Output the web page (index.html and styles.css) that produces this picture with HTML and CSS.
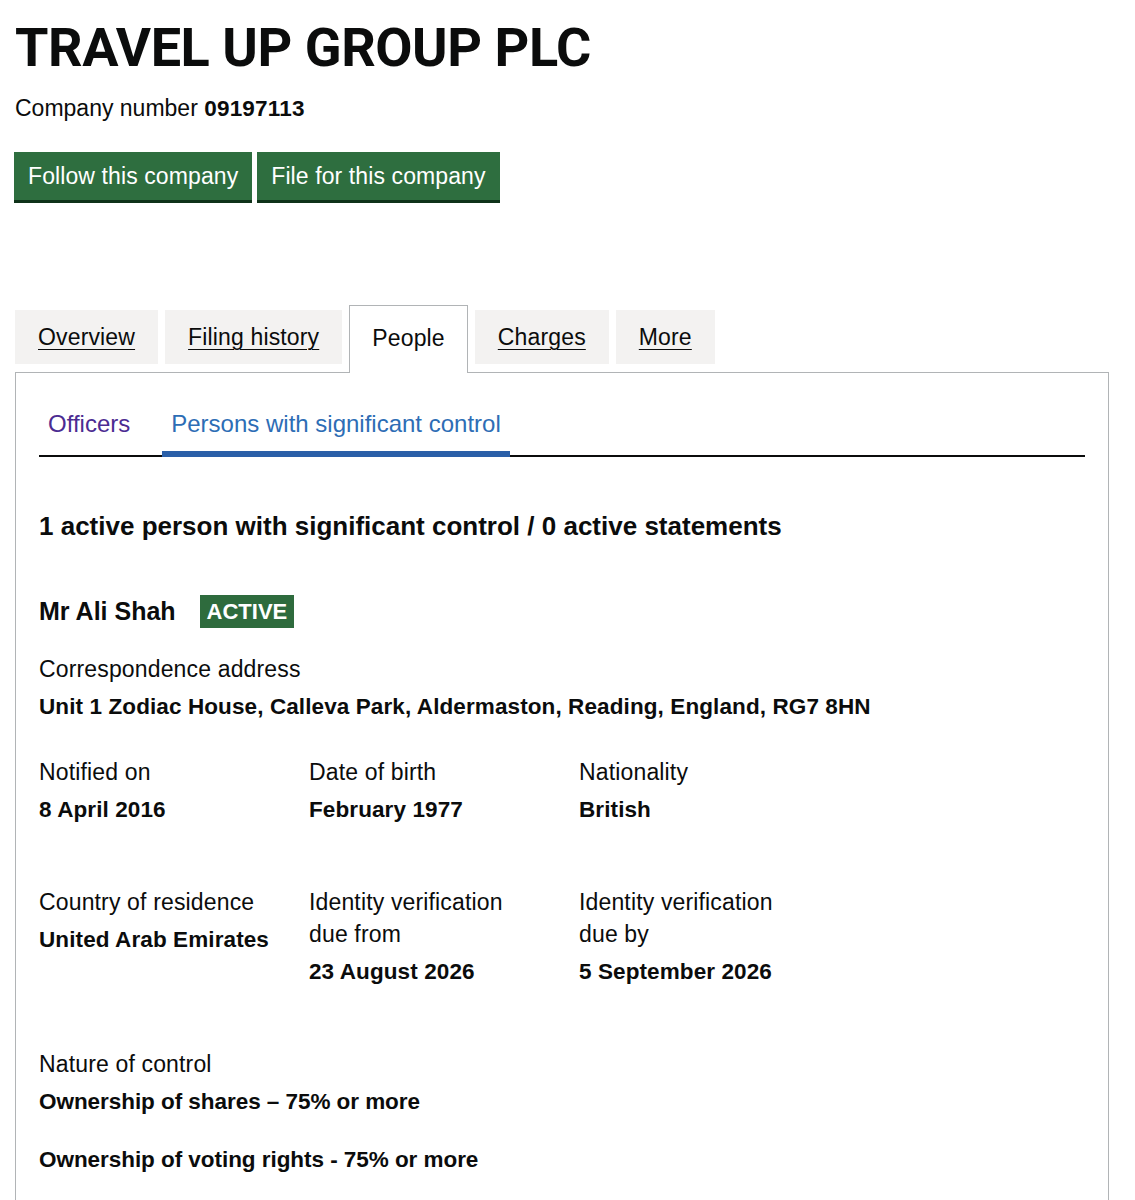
FILE: index.html
```html
<!DOCTYPE html>
<html lang="en">
<head>
<meta charset="utf-8">
<title>TRAVEL UP GROUP PLC - People</title>
<link rel="stylesheet" href="styles.css">
</head>
<body>
<main class="page">
  <h1 class="title">TRAVEL UP GROUP PLC</h1>
  <p class="company-number">Company number <strong>09197113</strong></p>
  <div class="actions">
    <a class="button" href="#">Follow this company</a>
    <a class="button" href="#">File for this company</a>
  </div>

  <div class="tabs">
    <ul class="tab-list">
      <li class="tab"><a href="#">Overview</a></li>
      <li class="tab"><a href="#">Filing history</a></li>
      <li class="tab tab--selected"><span>People</span></li>
      <li class="tab"><a href="#">Charges</a></li>
      <li class="tab"><a href="#">More</a></li>
    </ul>

    <section class="panel">
      <ul class="subnav">
        <li class="subnav-item"><a class="subnav-link subnav-link--visited" href="#">Officers</a></li>
        <li class="subnav-item subnav-item--current"><a class="subnav-link subnav-link--current" href="#">Persons with significant control</a></li>
      </ul>

      <h2 class="summary">1 active person with significant control / 0 active statements</h2>

      <div class="psc">
        <h3 class="psc-name">Mr Ali Shah <strong class="tag">ACTIVE</strong></h3>

        <dl class="field field--address">
          <dt class="label">Correspondence address</dt>
          <dd class="value">Unit 1 Zodiac House, Calleva Park, Aldermaston, Reading, England, RG7 8HN</dd>
        </dl>

        <div class="details-grid">
          <dl class="field">
            <dt class="label">Notified on</dt>
            <dd class="value">8 April 2016</dd>
          </dl>
          <dl class="field">
            <dt class="label">Date of birth</dt>
            <dd class="value">February 1977</dd>
          </dl>
          <dl class="field">
            <dt class="label">Nationality</dt>
            <dd class="value">British</dd>
          </dl>
          <dl class="field">
            <dt class="label">Country of residence</dt>
            <dd class="value">United Arab Emirates</dd>
          </dl>
          <dl class="field">
            <dt class="label">Identity verification due from</dt>
            <dd class="value">23 August 2026</dd>
          </dl>
          <dl class="field">
            <dt class="label">Identity verification due by</dt>
            <dd class="value">5 September 2026</dd>
          </dl>
        </div>

        <dl class="field field--nature">
          <dt class="label">Nature of control</dt>
          <dd class="value">Ownership of shares – 75% or more</dd>
          <dd class="value value--spaced">Ownership of voting rights - 75% or more</dd>
        </dl>
      </div>
    </section>
  </div>
</main>
</body>
</html>
```

FILE: styles.css
```css
* { box-sizing: border-box; }

body {
  margin: 0;
  background: #ffffff;
  color: #0b0c0c;
  font-family: "Liberation Sans", Arial, sans-serif;
}

.page {
  padding: 0 26px 0 15px;
}

.title {
  margin: 18px 0 0;
  font-family: Roboto, "Liberation Sans", Arial, sans-serif;
  font-weight: 700;
  font-size: 54px;
  line-height: 60px;
  letter-spacing: -0.45px;
}

.company-number {
  margin: 14px 0 0;
  font-size: 23px;
  line-height: 32px;
}

.company-number strong {
  font-size: 22.5px;
  letter-spacing: 0.2px;
}

.actions {
  display: flex;
  gap: 5px;
  margin-top: 27px;
  margin-left: -1px;
}

.button {
  display: inline-block;
  padding: 8px 14px;
  background: #2e6e3f;
  color: #ffffff;
  font-size: 23px;
  line-height: 32px;
  letter-spacing: 0.1px;
  text-decoration: none;
  box-shadow: 0 3px 0 #0f3219;
}

.tabs {
  margin-top: 105px;
}

.tab-list {
  display: flex;
  align-items: flex-start;
  gap: 7px;
  margin: 0;
  padding: 0;
  list-style: none;
}

.tab {
  margin-top: 5px;
  padding: 11px 23px;
  background: #f3f2f1;
  font-size: 23px;
  line-height: 32px;
  letter-spacing: 0.15px;
}

.tab a {
  color: #0b0c0c;
  text-decoration: underline;
  text-decoration-thickness: 1px;
  text-underline-offset: 4px;
}

.tab--selected {
  position: relative;
  z-index: 1;
  margin-top: 0;
  margin-bottom: -1px;
  padding: 16px 22px 19px;
  background: #ffffff;
  border: 1px solid #b1b4b6;
  border-bottom: 0;
}

.panel {
  border: 1px solid #b1b4b6;
  padding: 23px 23px 80px;
}

.subnav {
  display: flex;
  gap: 23px;
  margin: 0;
  padding: 0;
  list-style: none;
  border-bottom: 2px solid #0b0c0c;
}

.subnav-item {
  margin-bottom: -2px;
  padding: 12px 9px 11px;
  border-bottom: 6px solid transparent;
  font-size: 24px;
  line-height: 32px;
}

.subnav-item--current {
  border-bottom-color: #2a5fa8;
}

.subnav-link {
  text-decoration: none;
}

.subnav-link--visited {
  color: #4c2c92;
}

.subnav-link--current {
  color: #2d6db5;
}

.summary {
  margin: 52px 0 0;
  font-size: 26px;
  line-height: 34px;
  font-weight: 700;
}

.psc-name {
  display: flex;
  align-items: center;
  gap: 24px;
  margin: 50px 0 0;
  font-size: 25px;
  line-height: 36px;
  font-weight: 700;
}

.tag {
  display: inline-block;
  padding: 0 7px;
  background: #2e6b3d;
  color: #ffffff;
  font-size: 22px;
  line-height: 33px;
  font-weight: 700;
}

.field {
  margin: 0;
}

.field--address {
  margin-top: 24px;
}

.label {
  font-size: 23px;
  line-height: 32px;
  letter-spacing: 0.15px;
}

.value {
  margin: 6px 0 0;
  font-size: 22.5px;
  line-height: 32px;
  font-weight: 700;
  letter-spacing: 0.1px;
}

.field--nature .value {
  letter-spacing: -0.05px;
}

.value--spaced {
  margin-top: 26px;
}

.details-grid {
  display: grid;
  grid-template-columns: 236px 236px 236px;
  column-gap: 34px;
  row-gap: 60px;
  margin-top: 33px;
}

.field--nature {
  margin-top: 60px;
}
```
